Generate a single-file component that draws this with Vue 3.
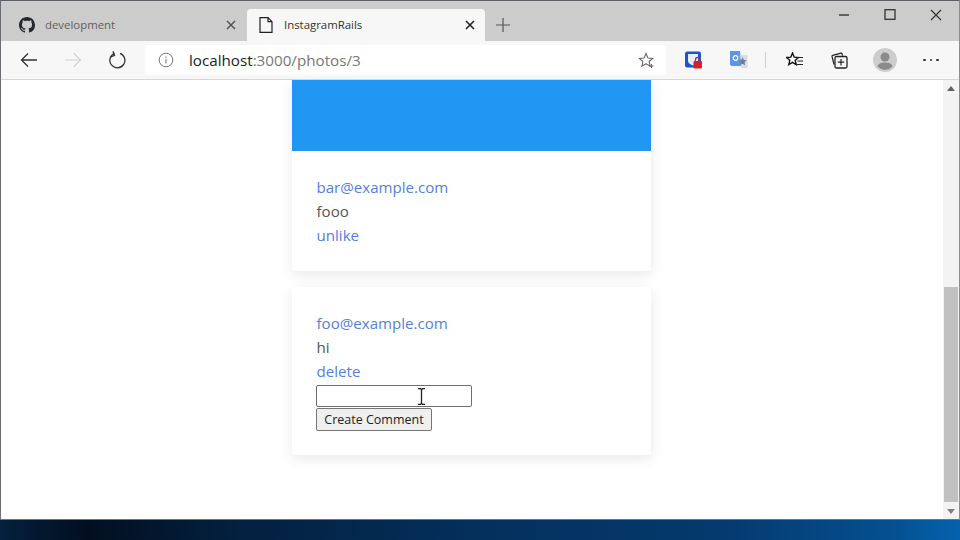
<script setup>
const cards = [
  { email: 'bar@example.com', text: 'fooo', action: 'unlike' },
  { email: 'foo@example.com', text: 'hi', action: 'delete', form: true }
]
</script>

<template>
  <div class="screen">
    <div class="window">
      <div class="tabstrip">
        <div class="tab">
          <svg class="gh" width="16" height="16" viewBox="0 0 16 16"><path fill="#24292e" d="M8 0C3.58 0 0 3.58 0 8c0 3.54 2.29 6.53 5.47 7.59.4.07.55-.17.55-.38 0-.19-.01-.82-.01-1.49-2.01.37-2.53-.49-2.69-.94-.09-.23-.48-.94-.82-1.13-.28-.15-.68-.52-.01-.53.63-.01 1.08.58 1.23.82.72 1.21 1.87.87 2.33.66.07-.52.28-.87.51-1.07-1.78-.2-3.64-.89-3.64-3.95 0-.87.31-1.59.82-2.15-.08-.2-.36-1.02.08-2.12 0 0 .67-.21 2.2.82.64-.18 1.32-.27 2-.27s1.36.09 2 .27c1.53-1.04 2.2-.82 2.2-.82.44 1.1.16 1.92.08 2.12.51.56.82 1.27.82 2.15 0 3.07-1.87 3.75-3.65 3.95.29.25.54.73.54 1.48 0 1.07-.01 1.93-.01 2.2 0 .21.15.46.55.38A8 8 0 0 0 16 8c0-4.42-3.58-8-8-8z"/></svg>
          <span class="tab-title dim">development</span>
          <svg class="tab-x" width="10" height="10" viewBox="0 0 10 10"><path d="M1 1l8 8M9 1l-8 8" stroke="#555" stroke-width="1.5" fill="none"/></svg>
        </div>
        <div class="tab active">
          <svg width="14" height="16" viewBox="0 0 14 16"><path d="M1 .7h8l4 4v10.6H1zM9 .7v4h4" fill="none" stroke="#222" stroke-width="1.2"/></svg>
          <span class="tab-title">InstagramRails</span>
          <svg class="tab-x" width="10" height="10" viewBox="0 0 10 10"><path d="M1 1l8 8M9 1l-8 8" stroke="#222" stroke-width="1.6" fill="none"/></svg>
        </div>
        <svg class="plus" width="14" height="14" viewBox="0 0 14 14"><path d="M7 0v14M0 7h14" stroke="#555" stroke-width="1.2"/></svg>
        <div class="caption">
          <svg width="12" height="12" viewBox="0 0 12 12"><path d="M1 6h10" stroke="#333" stroke-width="1.4"/></svg>
          <svg width="12" height="12" viewBox="0 0 12 12"><rect x="1" y=".7" width="10" height="9.6" fill="none" stroke="#333" stroke-width="1.3"/></svg>
          <svg width="12" height="12" viewBox="0 0 12 12"><path d="M1 1l10 10M11 1L1 11" stroke="#333" stroke-width="1.2"/></svg>
        </div>
      </div>

      <div class="toolbar">
        <svg class="nav" width="18" height="16" viewBox="0 0 18 16"><path d="M17 8H1.500M8 1.500L1.500 8 8 14.500" fill="none" stroke="#333" stroke-width="1.300"/></svg>
        <svg class="nav fwd" width="18" height="16" viewBox="0 0 18 16"><path d="M1 8h15.500M10 1.500L16.500 8 10 14.500" fill="none" stroke="#d4d4d4" stroke-width="1.200"/></svg>
        <svg class="nav reload" width="18" height="18" viewBox="0 0 18 18"><path d="M6.500 2.400A7.500 7.500 0 1 0 12 2.300" fill="none" stroke="#333" stroke-width="1.300"/><path d="M6 0v4.500h-4" fill="none" stroke="#333" stroke-width="1.300" transform="rotate(-20 6 3)"/></svg>
        <div class="omnibox">
          <svg width="16" height="16" viewBox="0 0 16 16"><circle cx="8" cy="8" r="6.800" fill="none" stroke="#777" stroke-width="1"/><path d="M8 7v4.500M8 4.500v1.200" stroke="#777" stroke-width="1.100"/></svg>
          <span class="url"><span class="host">localhost</span>:3000/photos/3</span>
          <svg class="star" width="17" height="17" viewBox="0 0 17 17"><path d="M8 1.500l1.900 4.500 4.800.4-3.600 3.100 1 4.600L8 11.700l-4.100 2.400 1-4.600L1.300 6.400 6.100 6z" fill="none" stroke="#666" stroke-width="1.100"/><path d="M13.500 12v4M11.500 14h4" stroke="#666"/></svg>
        </div>
        <div class="tools">
          <svg width="18" height="18" viewBox="0 0 18 18"><rect width="16" height="16" y="0.500" rx="2" fill="#1a56c8"/><path d="M3 3h10v7c0 2-2.500 3.500-5 4.500C5.500 13.500 3 12 3 10z" fill="#e8eef8"/><rect x="8.500" y="10" width="8.500" height="7.500" rx="1" fill="#d81e2c"/><path d="M10.500 10V8.500a2.200 2.200 0 0 1 4.400 0V10" fill="none" stroke="#d81e2c" stroke-width="1.300"/></svg>
          <svg class="t2" width="18" height="18" viewBox="0 0 18 18"><path d="M0 0h10l2 15H2a2 2 0 0 1-2-2z" fill="#5b94e8"/><path d="M10 4h7.500v13H11z" fill="#d8dde3"/><path d="M12.500 6l1.300 3 3 .3-2.300 2 .7 3-2.700-1.600-2.700 1.600.7-3-2.300-2 3-.3z" fill="#6b7f99"/><circle cx="5.500" cy="7" r="2.300" fill="none" stroke="#fff" stroke-width="1.300"/></svg>
          <span class="sep"></span>
          <svg class="t3" width="18" height="16" viewBox="0 0 18 16"><path d="M6.500 1l1.700 4.200 4.300.3-3.300 2.800 1 4.300-3.700-2.300-3.700 2.300 1-4.300L.5 5.500l4.300-.3z" fill="#fff" stroke="#111" stroke-width="1.400"/><path d="M11 5.500h6M11.500 9h5.500M11 12.500h6" stroke="#222" stroke-width="1.200"/></svg>
          <svg class="t4" width="17" height="17" viewBox="0 0 17 17"><path d="M3 12.500L1 4.500c-.1-.6.100-1 .7-1.100L10 1.200c.6-.1 1 .2 1.100.7l.4 1.800" fill="none" stroke="#222" stroke-width="1.200"/><rect x="4" y="4.500" width="12" height="11.500" rx="1.500" fill="#f5f5f5" stroke="#222" stroke-width="1.300"/><path d="M10 7v6.500M6.800 10.200h6.400" stroke="#222" stroke-width="1.200"/></svg>
          <span class="avatar"><svg width="24" height="24" viewBox="0 0 24 24"><circle cx="12" cy="12" r="12" fill="#cdcdcd"/><circle cx="12" cy="9" r="4.500" fill="#8a8a8a"/><path d="M4.500 18.500C5.500 15 9 14.500 12 14.500s6.500.5 7.500 4A11 11 0 0 1 12 22a11 11 0 0 1-7.500-3.500z" fill="#8a8a8a"/></svg></span>
          <span class="more"><i></i><i></i><i></i></span>
        </div>
      </div>

      <div class="viewport">
        <main class="page">
          <article v-for="(card, i) in cards" :key="card.email" class="card">
            <div v-if="i === 0" class="photo"></div>
            <div class="card-body">
              <a class="link">{{ card.email }}</a>
              <p class="text">{{ card.text }}</p>
              <a class="link">{{ card.action }}</a>
              <form v-if="card.form" class="comment-form" @submit.prevent>
                <input class="field" type="text" aria-label="Comment" />
                <button class="submit" type="submit">Create Comment</button>
              </form>
            </div>
          </article>
        </main>
        <div class="scrollbar">
          <span class="arrow up"></span>
          <span class="track"><span class="thumb"></span></span>
          <span class="arrow down"></span>
        </div>
        <svg class="ibeam" width="9" height="17" viewBox="0 0 9 17"><path d="M1 .7h2.500L4.500 2l1-1.300H8M4.500 2v13M1 16.300h2.500L4.500 15l1 1.300H8" fill="none" stroke="#222" stroke-width="1.300"/></svg>
      </div>
    </div>
    <div class="desktop"></div>
  </div>
</template>

<style scoped>
.screen {
  width: 960px;
  height: 540px;
  display: flex;
  flex-direction: column;
  overflow: hidden;
  font-family: "Open Sans", "Noto Sans", sans-serif;
  background: #fff;
}
.window {
  flex: 1;
  min-height: 0;
  display: flex;
  flex-direction: column;
  border-top: 1px solid #5c6064;
  border-left: 1px solid #6a6e72;
  border-right: 1px solid #8a8e92;
  border-bottom: 1px solid #70757a;
}
.tabstrip {
  height: 40px;
  flex: none;
  display: flex;
  align-items: flex-end;
  background: #cccccc;
}
.tab {
  width: 238px;
  height: 32px;
  padding: 0 3px 0 18px;
  box-sizing: border-box;
  display: flex;
  align-items: center;
  font-size: 11.4px;
  color: #333;
}
.gh { margin-right: 10px; }
.tab.active {
  padding: 0 10px 0 12px;
  margin-left: 8px;
  background: #f7f7f7;
  border-radius: 4px 4px 0 0;
}
.tab.active .tab-title { margin-left: 11px; }
.tab-title { flex: 1; margin-bottom: 2px; }
.dim { color: #5f5f5f; }
.plus { margin: 0 0 9px 11px; }
.caption {
  margin-left: auto;
  align-self: flex-start;
  display: flex;
  gap: 34px;
  padding: 8px 17px 0 0;
}
.toolbar {
  height: 38px;
  flex: none;
  display: flex;
  align-items: center;
  background: #f7f7f7;
  border-bottom: 1px solid #d6d6d6;
}
.nav { flex: none; margin-left: 19px; }
.fwd { margin-left: 26px; }
.reload { margin-left: 26px; }
.omnibox {
  width: 521px;
  height: 30px;
  margin-left: 19px;
  padding: 0 11px 0 13px;
  box-sizing: border-box;
  background: #fff;
  border-radius: 4px;
  display: flex;
  align-items: center;
}
.url {
  margin-left: 15px;
  flex: 1;
  font-size: 15.2px;
  color: #777;
}
.host { color: #222; }
.tools {
  display: flex;
  align-items: center;
  margin-left: 19px;
}
.t2 { margin-left: 27px; }
.sep { width: 1px; height: 16px; background: #cfcfcf; margin-left: 17px; }
.t3 { margin-left: 20px; }
.t4 { margin-left: 27px; }
.avatar { display: flex; margin-left: 25px; }
.more { display: flex; gap: 4px; margin-left: 26px; }
.more i { width: 2.500px; height: 2.500px; border-radius: 50%; background: #333; }
.viewport {
  flex: 1;
  min-height: 0;
  display: flex;
  position: relative;
  background: #fff;
}
.page {
  flex: 1;
  min-width: 0;
  overflow: hidden;
  display: flex;
  flex-direction: column;
  align-items: center;
  gap: 16px;
  padding-right: 1px;
}
.card {
  width: 359px;
  flex: none;
  background: #fff;
  border-radius: 0 0 3px 3px;
  box-shadow: 0 4px 14px rgba(0, 0, 0, 0.09);
}
.photo { height: 71px; background: #2196f3; }
.card-body {
  padding: 24px 24.500px;
  font-size: 15.1px;
  line-height: 24px;
  color: #555;
  display: flex;
  flex-direction: column;
  align-items: flex-start;
}
.link { color: #5480dc; }
.text { margin: 0; }
.comment-form {
  display: flex;
  flex-direction: column;
  align-items: flex-start;
  gap: 1px;
  margin: 2px 0 0 -0.500px;
}
.field {
  width: 156px;
  height: 22px;
  box-sizing: border-box;
  padding: 0 2px;
  background: #fff;
  border: 1px solid #6e6e6e;
  border-radius: 2px;
}
.submit {
  height: 23px;
  width: 116px;
  box-sizing: border-box;
  padding: 0;
  background: #efefef;
  border: 1px solid #767676;
  border-radius: 2px;
  font: 12.500px "Open Sans", "Noto Sans", sans-serif;
  color: #222;
}
.scrollbar {
  width: 16px;
  flex: none;
  background: #f3f3f3;
  display: flex;
  flex-direction: column;
  align-items: center;
}
.arrow {
  flex: none;
  width: 0;
  height: 0;
  border-left: 4px solid transparent;
  border-right: 4px solid transparent;
}
.up { margin: 6px 0 6px; border-bottom: 5px solid #606060; }
.down { margin: 6px 0 5px; border-top: 5px solid #808080; }
.track { flex: 1; width: 100%; display: flex; flex-direction: column; justify-content: flex-end; }
.thumb { display: block; height: 215px; margin: 0 1px 1px 1px; background: #c1c1c1; }
.ibeam { position: absolute; left: 416px; top: 308px; }
.desktop {
  height: 20px;
  flex: none;
  background: linear-gradient(90deg, #04203c 0%, #020f20 9%, #03203f 25%, #04305c 50%, #043a6e 75%, #045090 93%, #0562ae 100%);
}
</style>

<style>
html, body { margin: 0; padding: 0; }
</style>
